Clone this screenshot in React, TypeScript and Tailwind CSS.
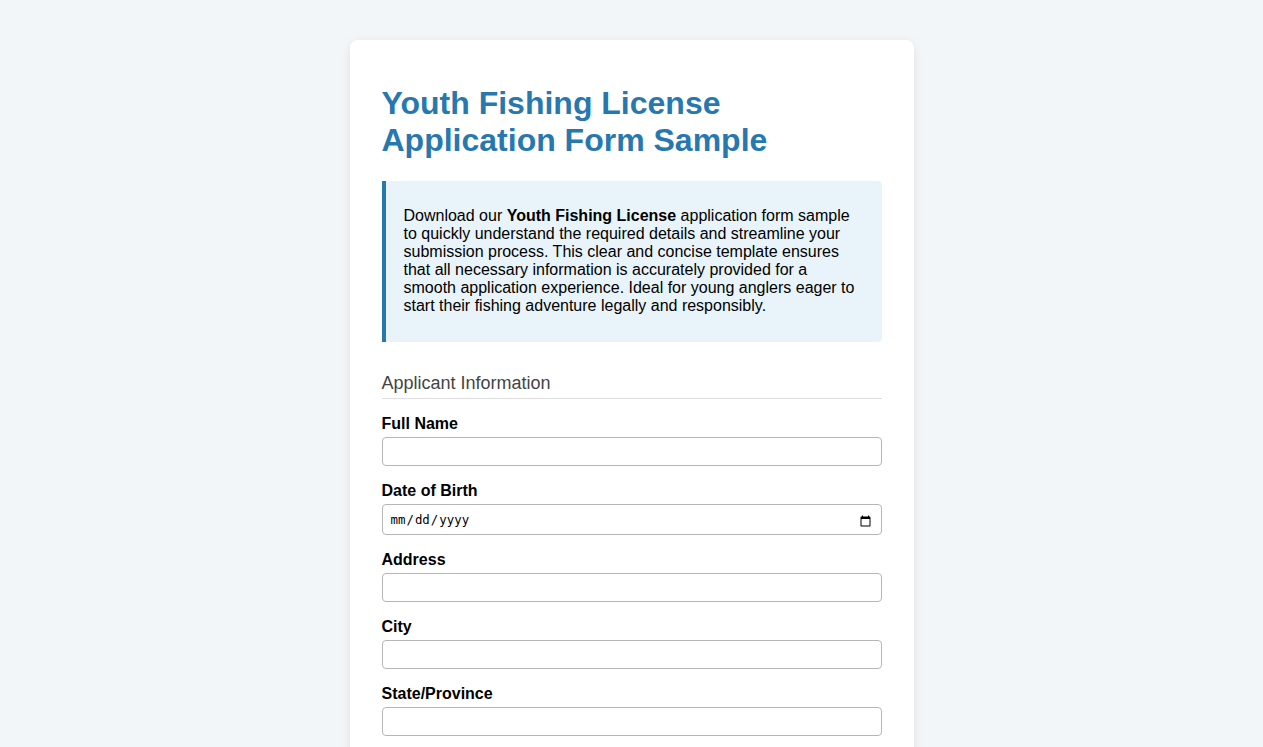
import React from "react";

function Field({ label, type = "text" }: { label: string; type?: string }) {
  return (
    <div className="mb-[15px]">
      <label className="block mb-[3px] text-[16px] font-bold leading-[20px] text-black">{label}</label>
      {type === "date" ? (
        <input
          type="date"
          className="block w-full h-[31px] pl-[7px] pr-[7px] pt-[2px] border border-[#b5b5b5] rounded-[4px] bg-white text-[12.4px] text-black"
          style={{ fontFamily: '"DejaVu Sans Mono", monospace' }}
        />
      ) : (
        <input
          type={type}
          className="block w-full h-[29px] px-2 border border-[#b5b5b5] rounded-[4px] bg-white text-[14px]"
        />
      )}
    </div>
  );
}

export default function App() {
  return (
    <div
      className="min-h-screen bg-[#f2f6f9] pt-10 pb-10"
      style={{ fontFamily: '"Liberation Sans", Arial, sans-serif' }}
    >
      <div className="mx-auto w-[564px] bg-white rounded-[8px] shadow-[0_2px_10px_rgba(0,0,0,0.08)] px-8 pt-[45px] pb-8">
        <h1 className="text-[32px] font-bold leading-[36.8px] text-[#2878b0]">
          Youth Fishing License
          <br />
          Application Form Sample
        </h1>
        <div className="mt-[22px] border-l-4 border-[#2878b0] bg-[#e8f4fa] rounded-r-[4px] pl-[18px] pr-5 pt-[26px] pb-[27px] text-[16px] leading-[18px] text-black">
          Download our <strong>Youth Fishing License</strong> application form sample to quickly understand the
          required details and streamline your submission process. This clear and concise template ensures that all
          necessary information is accurately provided for a smooth application experience. Ideal for young anglers
          eager to start their fishing adventure legally and responsibly.
        </div>
        <h2 className="mt-[31px] pb-[5px] border-b border-[#dedede] text-[18px] leading-[20.7px] text-[#444]">
          Applicant Information
        </h2>
        <div className="mt-[15px]">
          <Field label="Full Name" />
          <Field label="Date of Birth" type="date" />
          <Field label="Address" />
          <Field label="City" />
          <Field label="State/Province" />
          <Field label="Zip/Postal Code" />
          <Field label="Phone Number" />
          <Field label="Email Address" />
        </div>
      </div>
    </div>
  );
}
